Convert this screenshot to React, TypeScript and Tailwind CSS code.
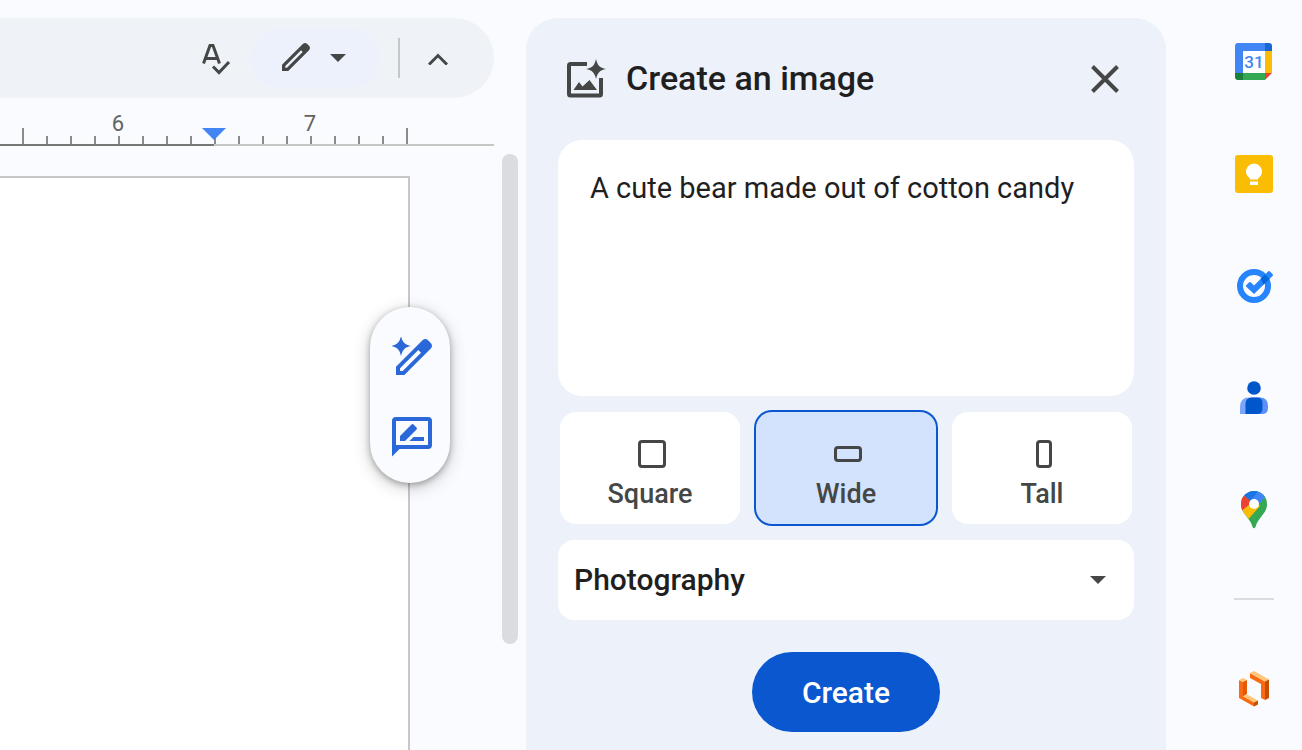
import { useState } from "react";
import type { ReactNode } from "react";
import clsx from "clsx";

const SPARK = "M0-10C1.5-3.5 3.5-1.5 10 0C3.5 1.5 1.5 3.5 0 10C-1.5 3.5-3.5 1.5-10 0C-3.5-1.5-1.5-3.5 0-10Z";

// ruler ticks, an eighth of an inch each
const ticks = Array.from({ length: 16 }, (_, i) => ({
  major: i % 8 === 0,
  label: i === 4 ? "6" : i === 12 ? "7" : null,
  marker: i === 8,
  inPage: i < 8,
}));

const shapes = [
  { id: "square", label: "Square", box: "h-7 w-7" },
  { id: "wide", label: "Wide", box: "h-4 w-7" },
  { id: "tall", label: "Tall", box: "h-7 w-4" },
];

function SpellcheckIcon() {
  return (
    <svg width="40" height="40" viewBox="0 0 40 40" fill="none" stroke="#444746" strokeWidth="3">
      <path d="M7.500 25.500L14 7.500h3l6.500 18M10 20.500h11" />
      <path d="M17 28.500l6 6L33 24" />
    </svg>
  );
}

function PencilIcon() {
  return (
    <svg width="28" height="28" viewBox="0 0 28 28" fill="#444746" className="overflow-visible">
      <path
        transform="translate(0 -1)"
        fillRule="evenodd"
        d="M0 28V21.800L20.800 1C22.300-.3 23.800-.3 25.200 1L27 2.800C28.300 4.200 28.300 5.800 27 7.200L6.200 28ZM3.300 24.700H5L20.700 9L19 7.300L3.300 23Z"
      />
    </svg>
  );
}

function CaretIcon() {
  return (
    <svg width="16" height="8" viewBox="0 0 16 8" fill="#444746">
      <path d="M0 0h16L8 8z" />
    </svg>
  );
}

function MagicPencilIcon() {
  return (
    <svg width="40" height="40" viewBox="0 0 40 40" fill="#2a67d8">
      <path transform="translate(9 9)" d={SPARK} />
      <path
        fillRule="evenodd"
        d="M4 38V29.700L30.500 3.200C32.300 1.600 34.300 1.600 36 3.200L38.800 6C40.400 7.800 40.400 9.800 38.800 11.500L12.300 38ZM8 34H10.700L29 15.700L26.300 13L8 31.300Z"
      />
    </svg>
  );
}

function SuggestIcon() {
  return (
    <svg width="40" height="40" viewBox="0 0 40 40" fill="#2a67d8">
      <path fillRule="evenodd" d="M4 0H36Q40 0 40 4V28Q40 32 36 32H7.500L0 39.500V4Q0 0 4 0ZM4 4V28H36V4Z" />
      <path d="M8 24V19L19.500 7.500Q20.500 6.500 21.500 7.500L24.500 10.500Q25.500 11.500 24.500 12.500L13 24ZM17.500 24L21.500 20H32V24Z" />
    </svg>
  );
}

function ImageSparkIcon() {
  return (
    <svg width="40" height="40" viewBox="0 0 40 40" fill="#444746">
      <path
        d="M21 5H4.500Q3 5 3 6.500V35Q3 36.500 4.500 36.500H33.500Q35 36.500 35 35V19"
        fill="none"
        stroke="#444746"
        strokeWidth="4"
      />
      <path d="M7.500 31L13 23L16.500 27.500L23.500 21L31 31Z" />
      <path transform="translate(30 10)" d={SPARK} />
    </svg>
  );
}

function CalendarIcon() {
  return (
    <svg width="38" height="38" viewBox="0 0 38 38">
      <path d="M3 0H30V8H8V30H0V3Q0 0 3 0Z" fill="#4285f4" />
      <path d="M30 0H34Q37 0 37 3V8H30Z" fill="#1967d2" />
      <path d="M30 8H37V30H30Z" fill="#fbbc04" />
      <path d="M0 30H8V37H3Q0 37 0 34Z" fill="#188038" />
      <path d="M8 30H30V37H8Z" fill="#34a853" />
      <path d="M30 30H37L30 37Z" fill="#ea4335" />
      <path d="M8 8H30V30H8Z" fill="#fff" />
      <text x="19" y="25" textAnchor="middle" fontSize="17" fontWeight="500" fill="#4285f4">
        31
      </text>
    </svg>
  );
}

function KeepIcon() {
  return (
    <svg width="38" height="38" viewBox="0 0 38 38">
      <rect width="38" height="38" rx="3" fill="#fbbc04" />
      <path d="M15 24.500V23.500A8 8 0 1 1 23 23.500V24.500ZM15 26.500H23V30H15Z" fill="#fff" />
    </svg>
  );
}

function TasksIcon() {
  return (
    <svg width="40" height="40" viewBox="0 0 40 40">
      <circle cx="20" cy="20" r="14" fill="none" stroke="#2684fc" strokeWidth="6" />
      <path
        d="M12 19.500L15 16.500Q16 15.500 17 16.500L20 19.500L34 5.500Q35 4.500 36 5.500L38.500 8Q39.500 9 38.500 10L20 28L12 20.500Z"
        fill="#2684fc"
      />
      <path d="M26.500 13L31 8.500Q34 11.500 35.500 13L29.500 18.500Q28.500 15.500 26.500 13Z" fill="#0066da" />
    </svg>
  );
}

function ContactsIcon() {
  return (
    <svg width="40" height="40" viewBox="0 0 40 40">
      <circle cx="20" cy="10" r="6.800" fill="#0057cc" />
      <path d="M6 36V29Q6 19.500 15 19.500H20V36Z" fill="#7ba5fa" />
      <path d="M20 19.500H26Q34 19.500 34 28V30Q34 36 28 36H20Z" fill="#5c8ffa" />
      <path d="M11.500 36V26Q11.500 19.500 18 19.500H23Q28.500 19.500 28.500 25V30Q28.500 36 23 36Z" fill="#0057cc" />
    </svg>
  );
}

function MapsIcon() {
  return (
    <svg width="26" height="38" viewBox="0 0 26 38">
      <defs>
        <clipPath id="pin">
          <path d="M13 0A13 13 0 0 1 26 13C26 19 23 22 20 26C17 30 15.500 32 14.500 36Q13 38.500 11.500 36C10.500 32 9 30 6 26C3 22 0 19 0 13A13 13 0 0 1 13 0Z" />
        </clipPath>
      </defs>
      <g clipPath="url(#pin)">
        <path d="M0 0H26V38H0Z" fill="#34a853" />
        <path d="M13 13L26 0V-2H-2V2L3 4.500Z" fill="#1a73e8" />
        <path d="M17.500 0H26V8L24 6L9 24V10Z" fill="#4285f4" />
        <path d="M3 4.500L12 12L0 21H-2V4Z" fill="#ea4335" />
        <path d="M13 10L1 19.500L7.500 28L19 15Z" fill="#fbbc04" />
      </g>
      <circle cx="13" cy="13" r="5" fill="#fff" />
    </svg>
  );
}

function LucidIcon() {
  return (
    <svg width="30" height="36" viewBox="0 0 30 36">
      <path d="M0 9V27L15 35.500V31L4 25V11Z" fill="#f96b13" />
      <path d="M0 9L4 7L8 9L4 11Z" fill="#ffc67a" />
      <path d="M4 11L8 9V23L4 25.500Z" fill="#e25a06" />
      <path d="M4 25.500L8 23.500L19 29.500L15 31.500Z" fill="#ffc67a" />
      <path d="M15 31.500L19 29.500V33.500L15 35.500Z" fill="#c94d00" />
      <path d="M11 2V7L22 13V27L26 29V10.500Z" fill="#f96b13" />
      <path d="M11 2L15 0L30 8.500L26 10.500Z" fill="#ffc67a" />
      <path d="M26 10.500L30 8.500V27L26 29Z" fill="#c94d00" />
    </svg>
  );
}

function RailButton({ label, children }: { label: string; children: ReactNode }) {
  return (
    <button type="button" aria-label={label} className="flex h-28 w-20 items-center justify-center">
      {children}
    </button>
  );
}

function Toolbar() {
  return (
    <div className="mr-8 flex h-20 items-center justify-end rounded-r-full bg-[#eff3f8] pr-9">
      <button type="button" aria-label="Spelling and grammar check" className="mr-3.5">
        <SpellcheckIcon />
      </button>
      <button
        type="button"
        aria-label="Editing mode"
        className="flex h-[60px] w-[130px] items-center justify-center gap-5 rounded-full bg-[#edf1fb] pr-0.5"
      >
        <PencilIcon />
        <CaretIcon />
      </button>
      <div className="mx-[18px] h-10 w-0.5 bg-[#c7c7c7]" />
      <button type="button" aria-label="Hide the menus" className="flex h-10 w-10 items-center justify-center pt-0.5">
        <svg width="20" height="12" viewBox="0 0 20 12" fill="none" stroke="#444746" strokeWidth="3">
          <path d="M1 11.500L10 2.500L19 11.500" />
        </svg>
      </button>
    </div>
  );
}

function Ruler() {
  return (
    <div className="mr-8 flex h-12 items-end justify-end">
      <div className="h-0.5 flex-1 bg-[#747775]" />
      {ticks.map((tick, i) => (
        <div
          key={i}
          className={clsx(
            "relative flex h-5 w-6 shrink-0 items-end border-b-2",
            tick.inPage ? "border-[#747775]" : "border-[#c4c7c5]"
          )}
        >
          <div className={clsx("w-0.5 bg-[#8a8c89]", tick.major && !tick.marker ? "h-4" : "h-2")} />
          {tick.label && (
            <span className="absolute bottom-2 -left-3 w-6 text-center text-[22px] leading-6 text-[#5f6361]">
              {tick.label}
            </span>
          )}
          {tick.marker && (
            <svg className="absolute -left-3 top-0.5" width="24" height="12" viewBox="0 0 24 12" fill="#4285f4">
              <path d="M0 0h24L12 12z" />
            </svg>
          )}
        </div>
      ))}
      <div className="flex h-5 w-[88px] items-end border-b-2 border-[#c4c7c5]">
        <div className="h-4 w-0.5 bg-[#8a8c89]" />
      </div>
    </div>
  );
}

function Editor() {
  return (
    <main className="flex min-w-0 flex-1 flex-col overflow-hidden pt-[18px]">
      <Toolbar />
      <Ruler />
      <div className="flex flex-1 pr-2">
        <div className="relative mt-[30px] mr-[92px] flex-1 border-t-2 border-r-2 border-[#c7c7c7] bg-white">
          <div className="absolute top-[129px] -right-[42px] flex h-44 w-20 flex-col items-center justify-center gap-10 rounded-full bg-[#fafbfe] pt-1 pl-1 shadow-[0_4px_16px_2px_rgba(0,0,0,0.16),0_2px_6px_rgba(0,0,0,0.3)]">
            <button type="button" aria-label="Help me write">
              <MagicPencilIcon />
            </button>
            <button type="button" aria-label="Suggest edits">
              <SuggestIcon />
            </button>
          </div>
        </div>
        <div className="mt-2 h-[490px] w-4 rounded-lg bg-[#dadce0]" />
      </div>
    </main>
  );
}

function ImagePanel() {
  const [prompt, setPrompt] = useState("A cute bear made out of cotton candy");
  const [shape, setShape] = useState("wide");
  const [style, setStyle] = useState("Photography");

  return (
    <aside className="mt-[18px] w-[640px] shrink-0 rounded-t-[32px] bg-[#ecf1fa] px-8 pb-4">
      <header className="flex h-[122px] items-center px-2">
        <ImageSparkIcon />
        <h1 className="ml-5 flex-1 pb-0.5 text-[34px] leading-10 font-medium text-[#1f1f1f]">Create an image</h1>
        <button type="button" aria-label="Close" className="flex h-10 w-10 items-center justify-center pr-0.5">
          <svg width="28" height="28" viewBox="0 0 28 28" fill="none" stroke="#444746" strokeWidth="4">
            <path d="M1.500 1.500L26.500 26.500M26.500 1.500L1.500 26.500" />
          </svg>
        </button>
      </header>

      <form onSubmit={(e) => e.preventDefault()}>
        <textarea
          aria-label="Image description"
          className="block h-64 w-full resize-none rounded-3xl bg-white px-8 py-7 text-[29px] leading-10 text-[#1f1f1f] outline-none"
          value={prompt}
          onChange={(e) => setPrompt(e.target.value)}
        />

        <div role="radiogroup" aria-label="Aspect ratio" className="mt-4 grid grid-cols-3 gap-4 px-0.5">
          {shapes.map((s) => (
            <label
              key={s.id}
              className={clsx(
                "flex h-28 flex-col items-center rounded-2xl pt-7 text-[27px] font-medium text-[#444746]",
                shape === s.id ? "bg-[#d3e3fd] ring-2 ring-[#0b57d0]" : "bg-white"
              )}
            >
              <input
                type="radio"
                name="shape"
                className="sr-only"
                checked={shape === s.id}
                onChange={() => setShape(s.id)}
              />
              <span className="flex h-7 items-center pl-1">
                <span className={clsx("rounded-sm border-3 border-[#444746]", s.box)} />
              </span>
              <span className="mt-2.5 leading-8">{s.label}</span>
            </label>
          ))}
        </div>

        <div className="relative mt-4">
          <select
            aria-label="Style"
            className="h-20 w-full appearance-none rounded-2xl bg-white px-4 pb-0.5 text-[30px] font-medium text-[#1f1f1f] outline-none"
            value={style}
            onChange={(e) => setStyle(e.target.value)}
          >
            <option>Photography</option>
            <option>Sketch</option>
            <option>Watercolor</option>
          </select>
          <span className="pointer-events-none absolute inset-y-0 right-7 flex items-center">
            <CaretIcon />
          </span>
        </div>

        <button
          type="submit"
          className="mx-auto mt-8 block h-20 w-[188px] rounded-full bg-[#0b57d0] text-[30px] font-medium text-white"
        >
          Create
        </button>
      </form>
    </aside>
  );
}

function SideRail() {
  return (
    <nav aria-label="Side panel" className="flex w-[136px] shrink-0 flex-col items-center pt-1.5 pl-10">
      <RailButton label="Calendar">
        <CalendarIcon />
      </RailButton>
      <RailButton label="Keep">
        <KeepIcon />
      </RailButton>
      <RailButton label="Tasks">
        <TasksIcon />
      </RailButton>
      <RailButton label="Contacts">
        <ContactsIcon />
      </RailButton>
      <RailButton label="Maps">
        <MapsIcon />
      </RailButton>
      <div className="mt-8 mb-[33px] h-0.5 w-10 bg-[#dadce0]" />
      <RailButton label="Lucidchart">
        <LucidIcon />
      </RailButton>
    </nav>
  );
}

export default function App() {
  return (
    <div className="flex min-h-screen bg-[#fafbfe] font-['Roboto',sans-serif]">
      <Editor />
      <ImagePanel />
      <SideRail />
    </div>
  );
}
